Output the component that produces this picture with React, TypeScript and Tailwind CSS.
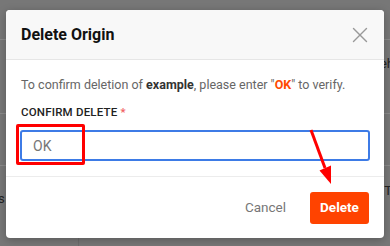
import { X } from 'lucide-react';

function Backdrop() {
  return (
    <div className="absolute inset-0 bg-[#777777]">
      <div className="h-[40px] border-b border-[#8a8a8a]" />
      <div className="h-[74px] border-b border-[#8a8a8a] flex justify-end items-start pt-[17px]">
        <span className="text-[13px] text-[#222] leading-none mr-[-4px]">eh</span>
      </div>
      <div className="h-[52px] border-b border-[#8a8a8a]" />
      <div className="flex h-[80px]">
        <div className="w-[79px] border-r border-[#6c6c6c] pt-[20px]">
          <span className="text-[13px] text-[#222] leading-none ml-[-2px]">s</span>
        </div>
        <div className="flex-1 flex justify-end pt-[18px]">
          <span className="text-[13px] text-[#222] leading-none mr-[-2px]">T</span>
        </div>
      </div>
    </div>
  );
}

export default function App() {
  return (
    <div className="relative w-[390px] h-[246px] overflow-hidden" style={{ fontFamily: 'Roboto, "Liberation Sans", sans-serif' }}>
      <Backdrop />

      {/* modal */}
      <div className="absolute left-[6px] top-[10px] w-[378px] h-[228px] bg-white rounded-[4px] shadow-[0_2px_8px_rgba(0,0,0,0.25)] flex flex-col overflow-hidden">
        <div className="h-[50px] bg-[#f8f8f8] border-b border-[#e6e6e6] flex items-center justify-between pl-[15px] pr-[11px]">
          <h2 className="text-[16px] font-bold text-[#111]">Delete Origin</h2>
          <X className="w-[26px] h-[26px] text-[#999]" strokeWidth={1.3} />
        </div>

        <div className="h-[117px] border-b border-[#ececec] px-[14px] pt-[17px]">
          <p className="text-[12.5px] text-[#666] leading-[16px] pl-[1px]">
            To confirm deletion of <b className="text-[#333]">example</b>, please enter "<b className="text-[#ff4a00]">OK</b>" to verify.
          </p>
          <label className="block mt-[12px] text-[11.5px] font-medium text-[#222] leading-[14px] tracking-[0.2px] pl-[1px]">
            CONFIRM DELETE <span className="text-[#f06060]">*</span>
          </label>
          <input
            readOnly
            value="OK"
            className="mt-[11px] w-full h-[31px] border-2 border-[#3d7be6] rounded-[3px] px-[11px] text-[14px] text-[#777] outline-none"
          />
        </div>

        <div className="flex-1 flex items-center justify-end pr-[15px] gap-[24px]">
          <span className="text-[13.5px] text-[#777]">Cancel</span>
          <button className="w-[59px] h-[32px] rounded-[3px] bg-[#ff4300] text-white text-[13.5px] font-bold">Delete</button>
        </div>
      </div>

      {/* annotations */}
      <div className="absolute left-[16px] top-[124px] w-[69px] h-[41px] border-[3px] border-[#ff0000] rounded-[2px]" />
      <svg className="absolute left-0 top-0" width="390" height="246">
        <line x1="311" y1="130" x2="325" y2="168" stroke="#ff0000" strokeWidth="3" />
        <polygon points="331,184 319.5,170.5 331,165.5" fill="#ff0000" />
      </svg>
    </div>
  );
}
